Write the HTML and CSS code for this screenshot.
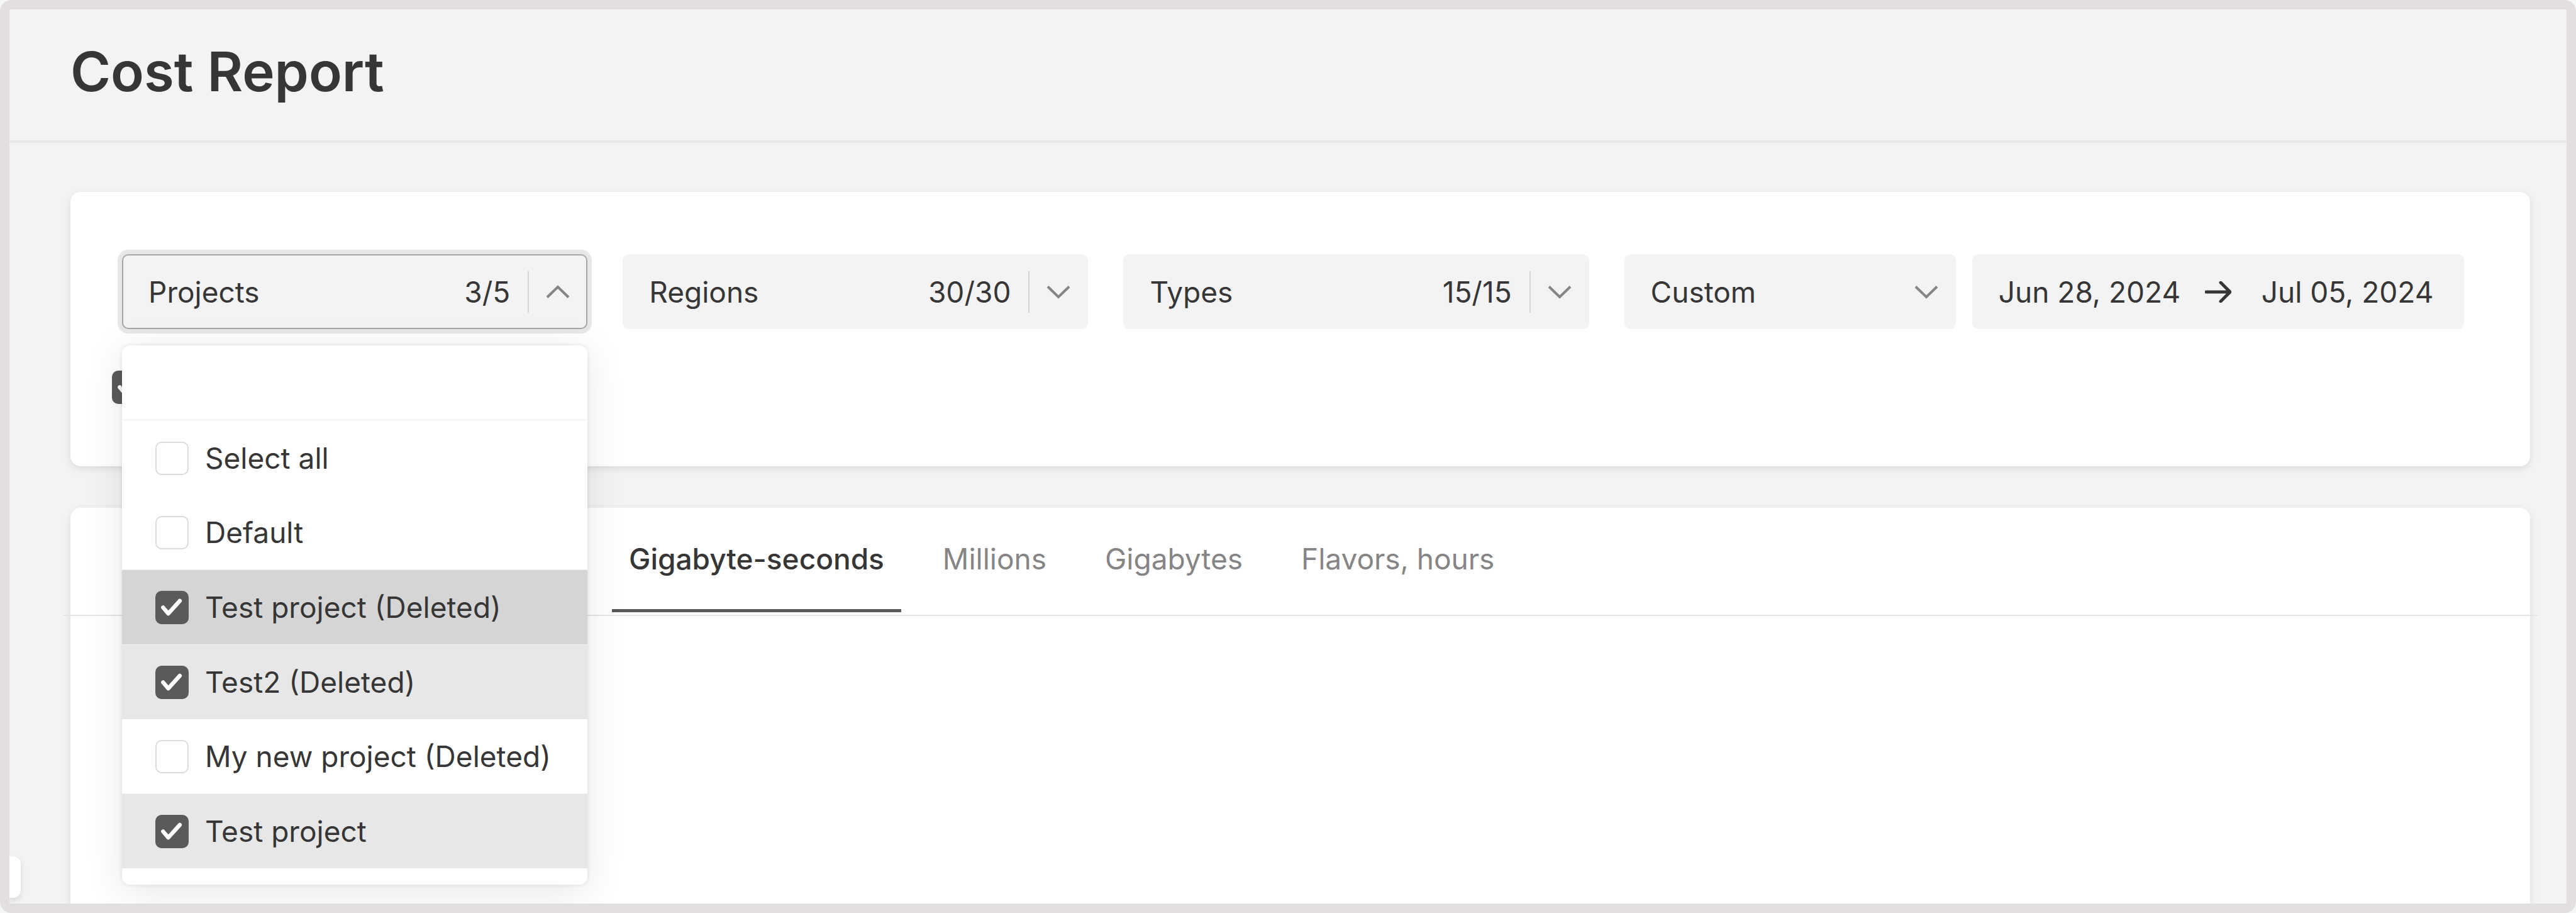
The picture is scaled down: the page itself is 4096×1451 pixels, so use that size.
FILE: index.html
```html
<!DOCTYPE html>
<html lang="en">
<head>
    <meta charset="UTF-8">
    <meta name="viewport" content="width=device-width, initial-scale=1.0">
    <title>Cost Report</title>
    <link rel="stylesheet" href="styles.css">
</head>
<body>

<div class="frame">
    <header class="header">
        <h1>Cost Report</h1>
    </header>

    <main class="content">
        <section class="card filters">
            <div class="filter-row">
                <div class="filter">
                    <button type="button" class="field open" aria-expanded="true" aria-controls="projects-menu">
                        <span class="field-name">Projects</span>
                        <span class="field-count">3/5</span>
                        <svg class="chevron" viewBox="0 0 38 22"><path d="M2 19.500 L19 3 L36 19.500"/></svg>
                    </button>
                    <div class="menu" id="projects-menu">
                        <input type="text" class="menu-search" aria-label="Search projects">
                        <label class="option"><input type="checkbox" class="check"><span>Select all</span></label>
                        <label class="option"><input type="checkbox" class="check"><span>Default</span></label>
                        <label class="option selected hovered"><input type="checkbox" class="check" checked><span>Test project (Deleted)</span></label>
                        <label class="option selected"><input type="checkbox" class="check" checked><span>Test2 (Deleted)</span></label>
                        <label class="option"><input type="checkbox" class="check"><span>My new project (Deleted)</span></label>
                        <label class="option selected"><input type="checkbox" class="check" checked><span>Test project</span></label>
                    </div>
                </div>
                <div class="filter">
                    <button type="button" class="field">
                        <span class="field-name">Regions</span>
                        <span class="field-count">30/30</span>
                        <svg class="chevron" viewBox="0 0 38 22"><path d="M2 2.500 L19 19 L36 2.500"/></svg>
                    </button>
                </div>
                <div class="filter">
                    <button type="button" class="field">
                        <span class="field-name">Types</span>
                        <span class="field-count">15/15</span>
                        <svg class="chevron" viewBox="0 0 38 22"><path d="M2 2.500 L19 19 L36 2.500"/></svg>
                    </button>
                </div>
                <div class="period">
                    <div class="period-type">
                        <select class="field" aria-label="Period">
                            <option>Custom</option>
                        </select>
                        <svg class="chevron" viewBox="0 0 38 22"><path d="M2 2.500 L19 19 L36 2.500"/></svg>
                    </div>
                    <div class="field dates">
                        <input type="text" class="date" value="Jun 28, 2024" aria-label="Start date">
                        <svg class="arrow" viewBox="0 0 42 34"><path d="M2 17 H39 M25 2 L40 17 L25 32"/></svg>
                        <input type="text" class="date" value="Jul 05, 2024" aria-label="End date">
                    </div>
                </div>
            </div>
            <div class="extra">
                <input type="checkbox" class="check" aria-label="Filter option" checked>
            </div>
        </section>

        <section class="card report">
            <div class="tabs" role="tablist">
                <button type="button" role="tab" class="tab active" aria-selected="true">Gigabyte-seconds</button>
                <button type="button" role="tab" class="tab">Millions</button>
                <button type="button" role="tab" class="tab">Gigabytes</button>
                <button type="button" role="tab" class="tab">Flavors, hours</button>
            </div>
        </section>
    </main>

    <button type="button" class="sidebar-toggle" aria-label="Open sidebar"></button>
</div>

</body>
</html>
```

FILE: styles.css
```css
* {
    box-sizing: border-box;
}
body {
    margin: 0;
    background-color: #f6f6f6;
    color: #363636;
    font-family: Inter, "Liberation Sans", sans-serif;
    font-size: 46px;
}
button, input, select {
    margin: 0;
    font: inherit;
    color: inherit;
}
button {
    cursor: pointer;
}
.frame {
    position: relative;
    display: flex;
    flex-direction: column;
    height: 100vh;
    border: 15px solid #e3dfde;
    border-radius: 18px;
    background-color: #f3f3f3;
    overflow: hidden;
}
.header {
    padding: 46px 97px 56px;
    border-bottom: 4px solid #e8e8e8;
}
h1 {
    margin: 0;
    font-size: 87px;
    font-weight: 600;
    line-height: 106px;
}
.content {
    display: flex;
    flex: 1;
    flex-direction: column;
    gap: 66px;
    padding: 78px 58px 0 97px;
}
.card {
    border-radius: 16px;
    background-color: #fff;
    box-shadow: 0 4px 12px rgba(0, 0, 0, 0.1);
}

/* filters */
.filters {
    padding: 99px 105px 99px 82px;
}
.filter-row {
    display: flex;
    gap: 56px;
}
.filter {
    position: relative;
    flex: 740 1 0;
}
.period {
    display: grid;
    flex: 1335 1 0;
    grid-template-columns: minmax(0, 527fr) minmax(0, 782fr);
    gap: 26px;
}
.field {
    display: flex;
    align-items: center;
    width: 100%;
    height: 119px;
    padding: 0 28px 0 42px;
    border: 0;
    border-radius: 10px;
    background-color: #f3f3f3;
    text-align: left;
}
.field.open {
    box-shadow: inset 0 0 0 2px #a6a6a6, 0 0 0 7px #e7e7e7;
}
.field-name {
    flex: 1;
}
.field-count {
    margin-right: 27px;
    padding-right: 28px;
    border-right: 2px solid #d4d4d4;
    line-height: 66px;
}
.chevron {
    width: 38px;
    height: 22px;
    fill: none;
    stroke: #858585;
    stroke-width: 4;
}
.period-type {
    position: relative;
}
.period-type select {
    appearance: none;
}
.period-type .chevron {
    position: absolute;
    top: 49px;
    right: 28px;
    pointer-events: none;
}
.dates {
    padding-right: 20px;
}
.date {
    width: 290px;
    padding: 0;
    border: 0;
    background: none;
}
.arrow {
    flex: none;
    width: 42px;
    height: 34px;
    margin: 0 48px 0 38px;
    fill: none;
    stroke: #363636;
    stroke-width: 5;
    stroke-linecap: round;
}
.extra {
    display: flex;
    margin: 66px 0 0 -16px;
}

/* checkboxes */
.check {
    appearance: none;
    flex: none;
    width: 53px;
    height: 53px;
    border: 2px solid #dcdcdc;
    border-radius: 10px;
    background-color: #fff;
}
.check:checked {
    border: 0;
    background: #5a5a5a url("data:image/svg+xml,%3Csvg xmlns='http://www.w3.org/2000/svg' viewBox='0 0 58 58'%3E%3Cpath d='M13.500 29 L22.500 39.500 L42.500 17.500' fill='none' stroke='white' stroke-width='7' stroke-linecap='round' stroke-linejoin='round'/%3E%3C/svg%3E") center / 100% no-repeat;
}

/* projects menu */
.menu {
    position: absolute;
    z-index: 2;
    top: calc(100% + 26px);
    left: 0;
    width: 100%;
    padding-bottom: 26px;
    border-radius: 12px;
    background-color: #fff;
    box-shadow: 0 0 4px 2px rgba(0, 0, 0, 0.06), 0 10px 60px rgba(0, 0, 0, 0.1);
}
.menu-search {
    display: block;
    width: 100%;
    height: 120px;
    padding: 0 53px;
    border: 0;
    border-bottom: 3px solid #f7f7f7;
    background: none;
}
.option {
    display: flex;
    align-items: center;
    gap: 26px;
    height: 118px;
    padding: 0 53px;
    white-space: nowrap;
}
.option.selected {
    height: 119px;
    border-top: 1px solid #f0f0f0;
    background-color: #e7e7e7;
}
.option.hovered {
    background-color: #d5d5d5;
}

/* report */
.report {
    flex: 1;
    border-radius: 16px 16px 0 0;
}
.tabs {
    display: flex;
    gap: 39px;
    height: 172px;
    margin: 0 -12px;
    padding: 0 0 4px 873px;
    border-bottom: 2px solid #e6e6e6;
}
.tab {
    padding: 0 27px;
    border: 0;
    border-bottom: 5px solid transparent;
    background: none;
    color: #858585;
}
.tab.active {
    border-color: #5a5a5a;
    color: #363636;
    font-weight: 500;
}

.sidebar-toggle {
    position: absolute;
    bottom: 9px;
    left: 0;
    width: 18px;
    height: 66px;
    border: 0;
    border-radius: 0 12px 12px 0;
    background-color: #fff;
    box-shadow: 0 4px 8px rgba(0, 0, 0, 0.12);
}
```
